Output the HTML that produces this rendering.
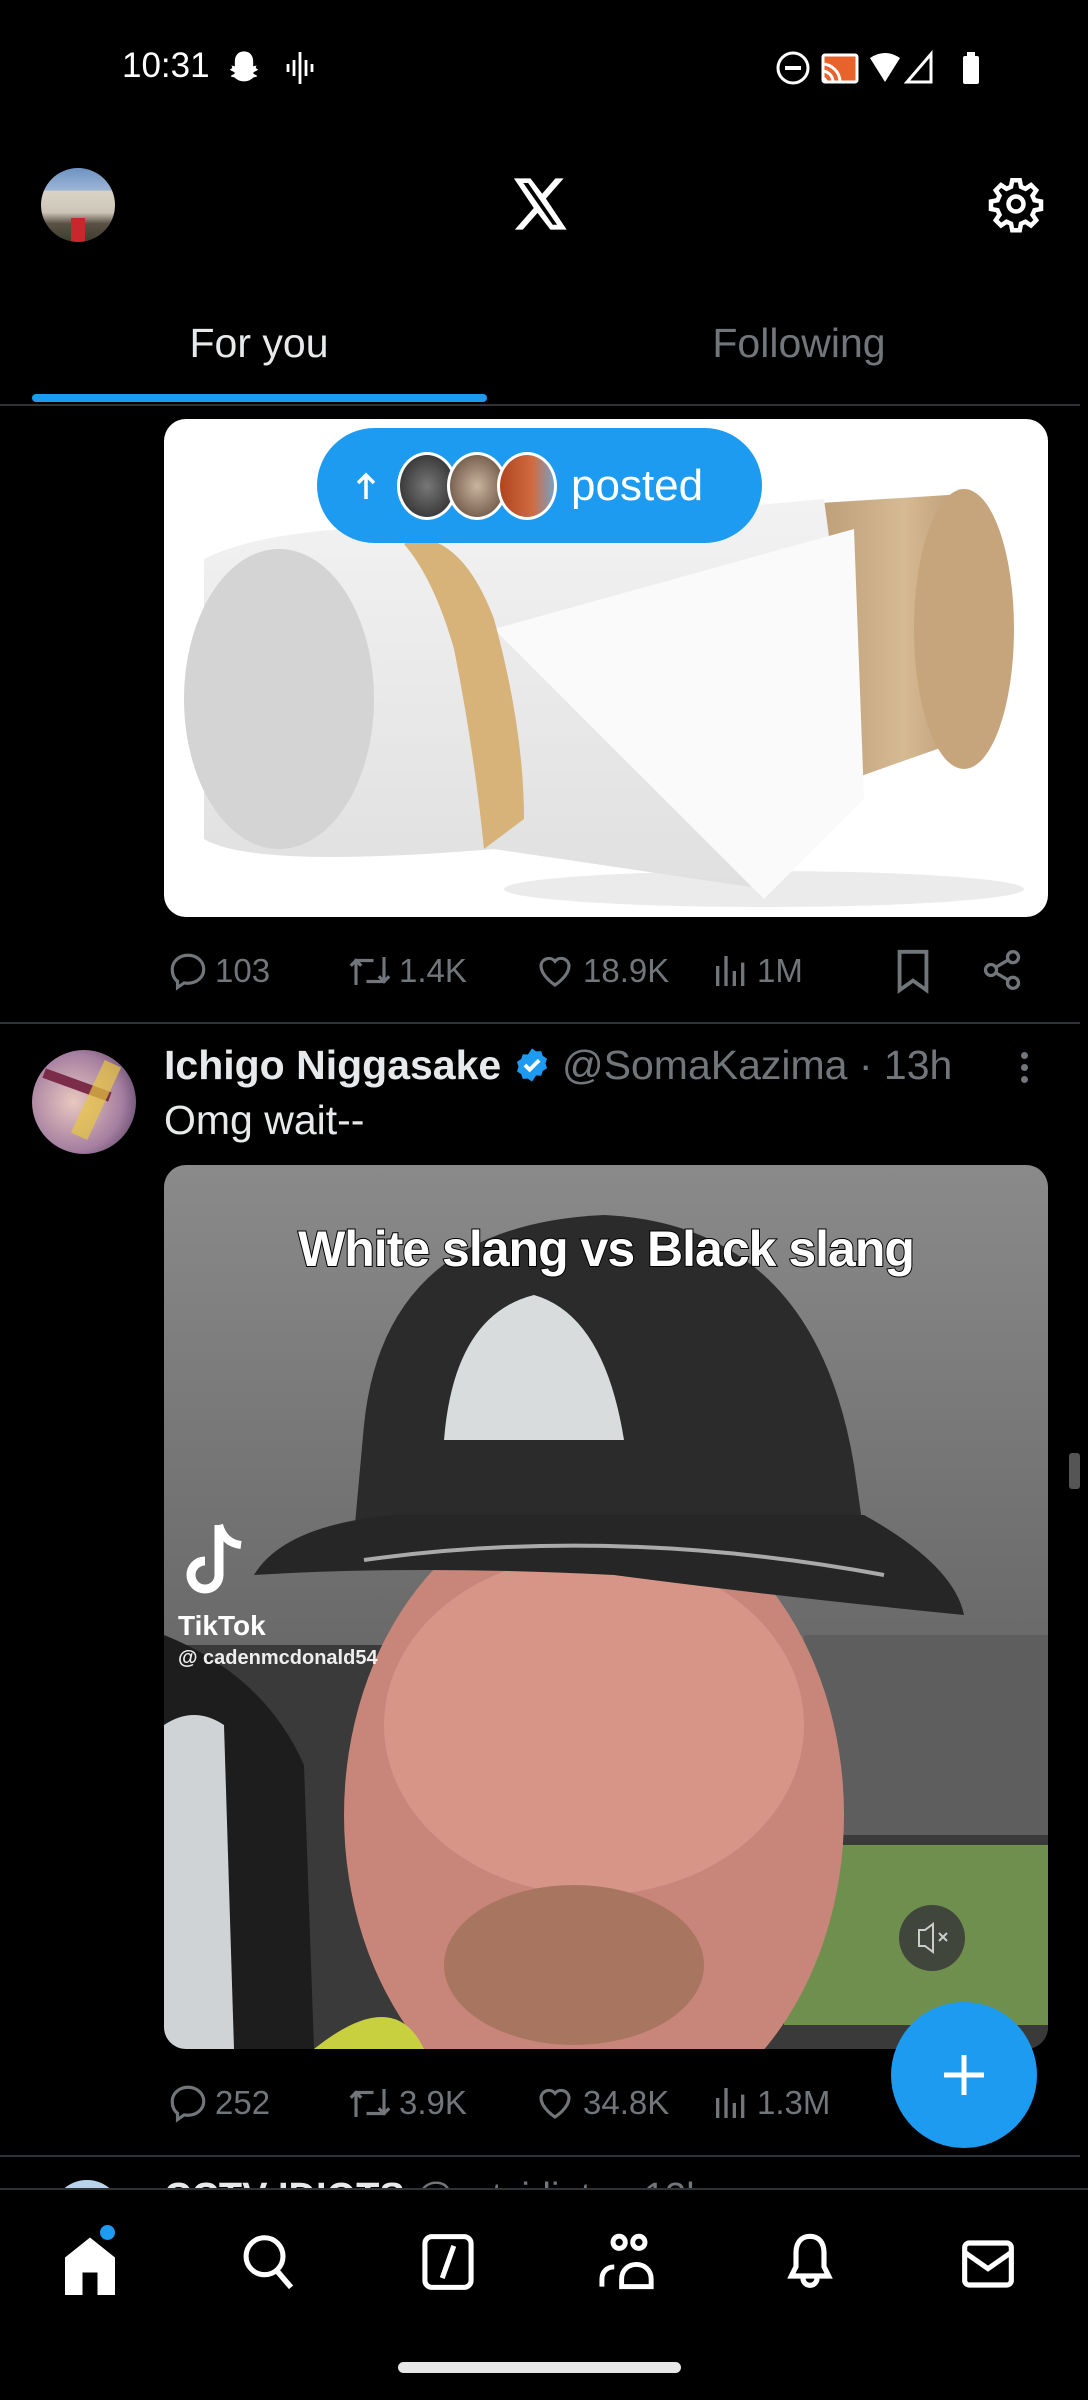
<!DOCTYPE html>
<html><head><meta charset="utf-8"><style>
*{margin:0;padding:0;box-sizing:border-box}
body{width:1088px;height:2400px;background:#000;position:relative;overflow:hidden;font-family:"Liberation Sans",sans-serif;color:#e7e9ea}
.abs{position:absolute}
.gray{color:#71767b}
.act{position:absolute;font-size:33px;color:#71767b;display:flex;align-items:center}
.act svg{margin-right:6px}
</style></head><body>
<!-- status bar -->
<div class="abs" style="left:122px;top:46px;font-size:35px;color:#fff">10:31</div>
<svg class="abs" style="left:224px;top:48px" width="40" height="40" viewBox="0 0 24 24"><path fill="#fff" d="M12 2c3.5 0 5.5 2.6 5.5 6v3l2-.5-.5 1.5 1.5 1c-1 1-2.5 1-3 2 .3 1 2 1 2.5 2-1 .5-2.5.3-3 1.3-.8.5-2 1.7-5 1.7s-4.2-1.2-5-1.7c-.5-1-2-.8-3-1.3.5-1 2.2-1 2.5-2-.5-1-2-1-3-2l1.5-1-.5-1.5 2 .5V8c0-3.4 2-6 5.5-6z"/></svg>
<svg class="abs" style="left:284px;top:50px" width="32" height="36" viewBox="0 0 16 18"><g stroke="#fff" stroke-width="1.4"><path d="M2 7v4M5 5v8M8 1v16M11 5v8M14 7v4"/></g></svg>
<svg class="abs" style="left:775px;top:50px" width="210" height="36" viewBox="0 0 210 36"><circle cx="18" cy="18" r="15" fill="none" stroke="#fff" stroke-width="3"/><rect x="10" y="16" width="16" height="4" fill="#fff"/><rect x="48" y="5" width="34" height="27" rx="2" fill="#e8622c" stroke="#fff" stroke-width="3"/><path d="M47 14a18 18 0 0 1 18 18M47 21a11 11 0 0 1 11 11M47 28a4 4 0 0 1 4 4" stroke="#fff" stroke-width="3" fill="none"/><path d="M95 8q15-10 30 0l-15 24z" fill="#fff"/><path d="M156 4v28h-24z" fill="none" stroke="#fff" stroke-width="3"/><rect x="188" y="6" width="16" height="28" rx="2" fill="#fff"/><rect x="192" y="2" width="8" height="5" fill="#fff"/></svg>
<!-- header -->
<div class="abs" style="left:41px;top:168px;width:74px;height:74px;border-radius:50%;overflow:hidden;background:linear-gradient(#6e93c4 0%,#9db4d4 30%,#d9d3c6 31%,#cdc6b8 60%,#5b5145 75%,#3c3d2a 100%)"><div style="position:absolute;left:30px;top:50px;width:14px;height:24px;background:#c9262e"></div></div>
<svg class="abs" style="left:513px;top:178px" width="56" height="52" viewBox="0 0 24 22"><path fill="#fff" d="M18.2 0h3.5l-7.6 8.7L23 22h-7l-5.5-7.2L4.2 22H.8l8.1-9.3L.4 0h7.1l5 6.6zm-1.2 19.9h1.9L6.5 2H4.4z"/></svg>
<svg class="abs" style="left:986px;top:174px" width="60" height="60" viewBox="0 0 24 24"><path fill="none" stroke="#fff" stroke-width="1.8" d="M10.5 2.5h3l.5 2.6 1.8.8 2.2-1.5 2.1 2.1-1.5 2.2.8 1.8 2.6.5v3l-2.6.5-.8 1.8 1.5 2.2-2.1 2.1-2.2-1.5-1.8.8-.5 2.6h-3l-.5-2.6-1.8-.8-2.2 1.5-2.1-2.1 1.5-2.2-.8-1.8-2.6-.5v-3l2.6-.5.8-1.8-1.5-2.2 2.1-2.1 2.2 1.5 1.8-.8z"/><circle cx="12" cy="12" r="3" fill="none" stroke="#fff" stroke-width="1.8"/></svg>
<!-- tabs -->
<div class="abs" style="left:0;width:518px;top:320px;text-align:center;font-size:41px;color:#e7e9ea">For you</div>
<div class="abs" style="left:544px;width:510px;top:320px;text-align:center;font-size:41px;color:#71767b">Following</div>
<div class="abs" style="left:32px;top:394px;width:455px;height:8px;border-radius:4px;background:#1d9bf0"></div>
<div class="abs" style="left:0;top:404px;width:1080px;height:2px;background:#2f3336"></div>
<!-- image 1 -->
<div class="abs" style="left:164px;top:419px;width:884px;height:498px;border-radius:22px;overflow:hidden;background:#fff">
<svg width="884" height="498" viewBox="0 0 884 498">
<defs><linearGradient id="cb" x1="0" x2="1"><stop offset="0" stop-color="#b89a72"/><stop offset=".5" stop-color="#d6ba94"/><stop offset="1" stop-color="#a88660"/></linearGradient>
<linearGradient id="tp" x1="0" y1="0" x2="0" y2="1"><stop offset="0" stop-color="#f2f2f2"/><stop offset="1" stop-color="#e0e0e0"/></linearGradient></defs>
<ellipse cx="600" cy="470" rx="260" ry="18" fill="#ddd" opacity=".6"/>
<path d="M640 85 L800 75 Q860 180 830 310 L660 370 Z" fill="url(#cb)"/>
<ellipse cx="800" cy="210" rx="50" ry="140" fill="#c7a57c"/>
<path d="M40 140 Q120 100 330 110 L660 80 L700 380 L600 470 L330 430 Q90 450 40 420 Z" fill="url(#tp)"/>
<ellipse cx="115" cy="280" rx="95" ry="150" fill="#d4d4d4"/>
<path d="M330 210 L690 110 L700 380 L600 480 Z" fill="#fafafa"/>
<path d="M250 118 Q300 120 330 200 Q360 310 360 400 L320 430 Q310 330 290 230 Q270 160 240 125 Z" fill="#d7b37a"/>
</svg>
</div>
<!-- posted pill -->
<div class="abs" style="left:317px;top:428px;width:445px;height:115px;border-radius:58px;background:#1d9bf0;display:flex;align-items:center">
<svg style="margin-left:38px" width="22" height="30" viewBox="0 0 22 30"><path d="M11 28V4M3 12l8-8 8 8" stroke="#fff" stroke-width="3.5" fill="none"/></svg>
<div style="margin-left:20px;width:60px;height:68px;border-radius:50%;border:3px solid #fff;background:radial-gradient(#777,#222)"></div>
<div style="margin-left:-10px;width:60px;height:68px;border-radius:50%;border:3px solid #fff;background:radial-gradient(#c9b5a0,#5a4030)"></div>
<div style="margin-left:-10px;width:60px;height:68px;border-radius:50%;border:3px solid #fff;background:linear-gradient(90deg,#b04520,#d06a40 60%,#7aa0c0)"></div>
<span style="margin-left:14px;font-size:44px;color:#fff">posted</span>
</div>
<!-- actions 1 -->
<div class="act" style="left:167px;top:950px"><svg width="42" height="42" viewBox="0 0 24 24"><path fill="none" stroke="#71767b" stroke-width="1.8" d="M12 3c5 0 9 3.5 9 8s-4 8-9 8c-.8 0-1.5-.1-2.2-.2L6 21.5v-3.6C4.1 16.5 3 14 3 11c0-4.5 4-8 9-8z"/></svg>103</div>
<div class="act" style="left:347px;top:950px"><svg width="46" height="42" viewBox="0 0 26 24"><path fill="none" stroke="#71767b" stroke-width="1.8" d="M5 20V6h10M2 9l3-3 3 3M21 4v14H11M18 15l3 3 3-3"/></svg>1.4K</div>
<div class="act" style="left:533px;top:950px"><svg width="44" height="42" viewBox="0 0 24 24"><path fill="none" stroke="#71767b" stroke-width="1.8" d="M12 20s-8-5-8-11a4.5 4.5 0 0 1 8-2.5A4.5 4.5 0 0 1 20 9c0 6-8 11-8 11z"/></svg>18.9K</div>
<div class="act" style="left:711px;top:950px"><svg width="40" height="42" viewBox="0 0 24 24"><path stroke="#71767b" stroke-width="2" d="M4 21V9M9 21V3M14 21V12M19 21V7"/></svg>1M</div>
<svg class="abs" style="left:893px;top:948px" width="40" height="46" viewBox="0 0 20 24"><path fill="none" stroke="#71767b" stroke-width="2" d="M3 2h14v20l-7-5-7 5z"/></svg>
<svg class="abs" style="left:980px;top:948px" width="44" height="44" viewBox="0 0 24 24"><g fill="none" stroke="#71767b" stroke-width="1.8"><circle cx="18" cy="5" r="3"/><circle cx="6" cy="12" r="3"/><circle cx="18" cy="19" r="3"/><path d="M8.6 10.5l6.8-4M8.6 13.5l6.8 4"/></g></svg>
<div class="abs" style="left:0;top:1022px;width:1080px;height:2px;background:#2f3336"></div>
<!-- tweet 2 -->
<div class="abs" style="left:32px;top:1050px;width:104px;height:104px;border-radius:50%;overflow:hidden;background:radial-gradient(circle at 40% 50%,#e8c8c0,#a57fa0 60%,#3c2a50)"><div style="position:absolute;left:10px;top:30px;width:70px;height:10px;background:#7a2c48;transform:rotate(20deg)"></div><div style="position:absolute;left:55px;top:10px;width:18px;height:80px;background:#e8c840;transform:rotate(25deg);opacity:.7"></div></div>
<div class="abs" style="left:164px;top:1042px;font-size:41px;white-space:nowrap"><b style="color:#e7e9ea">Ichigo Niggasake</b> <svg style="vertical-align:-5px" width="38" height="38" viewBox="0 0 24 24"><path fill="#1d9bf0" d="M12 1.5l2.6 1.9 3.2-.2 1 3 2.7 1.8-1 3 1 3-2.7 1.8-1 3-3.2-.2L12 22.5l-2.6-1.9-3.2.2-1-3-2.7-1.8 1-3-1-3 2.7-1.8 1-3 3.2.2z"/><path d="M7.5 12l3 3 6-6" stroke="#fff" stroke-width="2.4" fill="none"/></svg> <span class="gray">@SomaKazima · 13h</span></div>
<div class="abs" style="left:1021px;top:1052px;width:8px"><div style="width:7px;height:7px;border-radius:50%;background:#71767b;margin-bottom:5px"></div><div style="width:7px;height:7px;border-radius:50%;background:#71767b;margin-bottom:5px"></div><div style="width:7px;height:7px;border-radius:50%;background:#71767b"></div></div>
<div class="abs" style="left:164px;top:1097px;font-size:41px">Omg wait--</div>
<!-- video -->
<div class="abs" style="left:164px;top:1165px;width:884px;height:884px;border-radius:22px;overflow:hidden;background:linear-gradient(180deg,#8a8a8a,#6c6c6c 50%,#555)">
<svg width="884" height="884" viewBox="0 0 884 884">
<rect x="0" y="480" width="884" height="404" fill="#3a3a3a"/>
<path d="M0 470 Q100 510 140 600 L150 884 L0 884Z" fill="#1d1d1d"/>
<rect x="640" y="470" width="244" height="200" fill="#5e5e5e"/>
<rect x="620" y="680" width="264" height="180" fill="#6f8f4e"/>
<path d="M0 560 Q30 540 60 560 L70 884 L0 884Z" fill="#cfd3d6"/>
<ellipse cx="430" cy="650" rx="250" ry="320" fill="#c8867a"/>
<ellipse cx="430" cy="560" rx="210" ry="170" fill="#d79588"/>
<ellipse cx="410" cy="800" rx="130" ry="80" fill="#a87560"/>
<path d="M150 884 Q230 820 260 884Z" fill="#c8d040"/>
<path d="M200 260 Q220 60 440 50 Q650 60 690 300 L700 370 L190 370Z" fill="#2b2b2b"/>
<path d="M90 410 Q120 360 230 350 L700 350 Q790 400 800 450 Q600 430 450 410 Q250 400 90 410Z" fill="#262626"/>
<path d="M200 395 Q450 360 720 410" stroke="#aaa" stroke-width="4" fill="none"/>
<path d="M280 275 Q290 150 370 130 Q440 150 460 275Z" fill="#d8dcdc"/>
<circle cx="768" cy="773" r="33" fill="#3a3a3a" opacity=".85"/>
<path d="M755 765h6l8-6v28l-8-6h-6z" fill="none" stroke="#ccc" stroke-width="2"/>
<path d="M775 768l8 8M783 768l-8 8" stroke="#ccc" stroke-width="2"/>
<path d="M55 360 v50 a14 14 0 1 1 -14 -14" stroke="#fff" stroke-width="9" fill="none"/>
<path d="M55 360 q5 18 22 20" stroke="#fff" stroke-width="8" fill="none"/>
</svg>
<div class="abs" style="left:0;width:884px;top:55px;text-align:center;font-size:50px;font-weight:bold;color:#fff;-webkit-text-stroke:2px #000;paint-order:stroke fill;letter-spacing:-1px">White slang vs Black slang</div>
<div class="abs" style="left:14px;top:445px;font-size:28px;font-weight:bold;color:#fff">TikTok</div>
<div class="abs" style="left:14px;top:482px;font-size:20px;font-weight:bold;color:#eee">@ cadenmcdonald54</div>
</div>
<!-- actions 2 -->
<div class="act" style="left:167px;top:2082px"><svg width="42" height="42" viewBox="0 0 24 24"><path fill="none" stroke="#71767b" stroke-width="1.8" d="M12 3c5 0 9 3.5 9 8s-4 8-9 8c-.8 0-1.5-.1-2.2-.2L6 21.5v-3.6C4.1 16.5 3 14 3 11c0-4.5 4-8 9-8z"/></svg>252</div>
<div class="act" style="left:347px;top:2082px"><svg width="46" height="42" viewBox="0 0 26 24"><path fill="none" stroke="#71767b" stroke-width="1.8" d="M5 20V6h10M2 9l3-3 3 3M21 4v14H11M18 15l3 3 3-3"/></svg>3.9K</div>
<div class="act" style="left:533px;top:2082px"><svg width="44" height="42" viewBox="0 0 24 24"><path fill="none" stroke="#71767b" stroke-width="1.8" d="M12 20s-8-5-8-11a4.5 4.5 0 0 1 8-2.5A4.5 4.5 0 0 1 20 9c0 6-8 11-8 11z"/></svg>34.8K</div>
<div class="act" style="left:711px;top:2082px"><svg width="40" height="42" viewBox="0 0 24 24"><path stroke="#71767b" stroke-width="2" d="M4 21V9M9 21V3M14 21V12M19 21V7"/></svg>1.3M</div>
<div class="abs" style="left:0;top:2155px;width:1080px;height:2px;background:#2f3336"></div>
<!-- partial next tweet -->
<div class="abs" style="left:0;top:2160px;width:1088px;height:28px;overflow:hidden">
<div class="abs" style="left:52px;top:20px;width:70px;height:70px;border-radius:50%;background:#b9d3ea"></div>
<div class="abs" style="left:164px;top:16px;font-size:38px;font-weight:bold;color:#e7e9ea">CCTV IDIOTS <span style="color:#71767b;font-weight:normal">@cctvidiots · 13h</span></div>
</div>
<div class="abs" style="left:0;top:2188px;width:1088px;height:212px;background:#000;border-top:2px solid #2f3336"></div>
<!-- FAB -->
<div class="abs" style="left:891px;top:2002px;width:146px;height:146px;border-radius:50%;background:#1d9bf0"></div>
<svg class="abs" style="left:941px;top:2052px" width="46" height="46" viewBox="0 0 46 46"><path d="M23 3v40M3 23h40" stroke="#fff" stroke-width="5"/></svg>
<!-- bottom nav -->
<svg class="abs" style="left:60px;top:2225px" width="60" height="70" viewBox="0 0 24 28"><path fill="#fff" d="M12 5L2 13v15h7v-9h6v9h7V13z"/><circle cx="19" cy="3" r="3" fill="#1d9bf0"/></svg>
<svg class="abs" style="left:240px;top:2232px" width="56" height="60" viewBox="0 0 24 26"><circle cx="10.5" cy="10.5" r="8" fill="none" stroke="#fff" stroke-width="2.2"/><path d="M16 17l6 7" stroke="#fff" stroke-width="2.4"/></svg>
<svg class="abs" style="left:420px;top:2232px" width="56" height="60" viewBox="0 0 24 26"><rect x="2" y="2" width="20" height="22" rx="3" fill="none" stroke="#fff" stroke-width="2.2"/><path d="M14.5 6l-5 14" stroke="#fff" stroke-width="2.2"/></svg>
<svg class="abs" style="left:597px;top:2232px" width="64" height="60" viewBox="0 0 26 24"><g fill="none" stroke="#fff" stroke-width="2"><circle cx="9" cy="4" r="2.5"/><circle cx="17" cy="4" r="2.5"/><path d="M2 22v-3c0-3 2-5 5-5M10 22v-3c0-4 3-6 6-6s6 2 6 6v3z"/></g></svg>
<svg class="abs" style="left:782px;top:2230px" width="56" height="64" viewBox="0 0 24 26"><path fill="none" stroke="#fff" stroke-width="2.2" d="M12 2c-4 0-6 3-6 7v6l-2 4h16l-2-4V9c0-4-2-7-6-7zM9 20a3 3 0 0 0 6 0"/></svg>
<svg class="abs" style="left:960px;top:2236px" width="56" height="56" viewBox="0 0 24 24"><rect x="2" y="3" width="20" height="18" rx="2" fill="none" stroke="#fff" stroke-width="2.2"/><path d="M2 7l10 7 10-7" fill="none" stroke="#fff" stroke-width="2.2"/></svg>
<div class="abs" style="left:398px;top:2362px;width:283px;height:11px;border-radius:6px;background:#e6e6e6"></div>
<div class="abs" style="left:1069px;top:1453px;width:11px;height:36px;border-radius:3px;background:#555"></div>
</body></html>
